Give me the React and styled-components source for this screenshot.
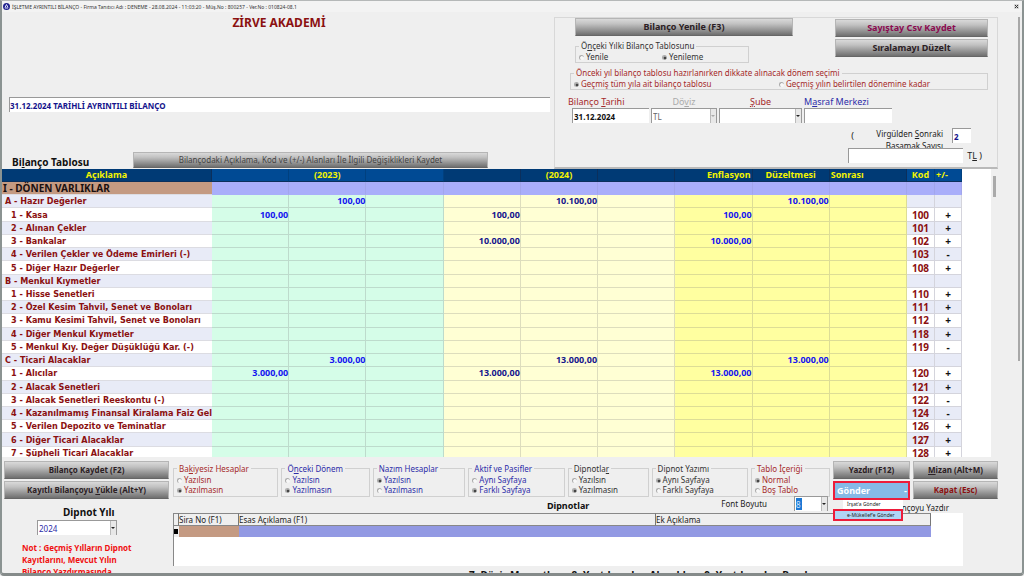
import React, { useState } from 'react'
import styled, { createGlobalStyle } from 'styled-components'

const GlobalStyle = createGlobalStyle`
    * {
        box-sizing: border-box;
    }
    body {
        margin: 0;
        background-color: #efefef;
        font-family: "Noto Sans", "Open Sans", sans-serif;
        font-size: 9px;
        line-height: 12px;
        color: #222;
    }
    button, input, select {
        font-family: inherit;
        margin: 0;
    }
`
const Window = styled.div`
    height: 100vh;
    display: flex;
    flex-direction: column;
    background-color: #efefef;
    border: 2px solid #8b9392;
    border-top: 1px solid #b5b8b8;
    border-bottom: 3px solid #858b8a;
    border-radius: 0 0 4px 4px;
    overflow: hidden;
`
const TitleBar = styled.header`
    display: flex;
    align-items: center;
    height: 11px;
    padding: 0 3px 0 1px;
    gap: 2px;
    background-color: #f3f3f3;
    font-size: 5px;
    line-height: 10px;
    color: #333;
`
const TitleText = styled.span`
    flex: 1;
`
const CloseButton = styled.button`
    display: flex;
    padding: 0;
    border: none;
    background: none;
`
const Body = styled.div`
    flex: 1;
    min-height: 0;
    display: flex;
`
const Main = styled.main`
    flex: 1;
    min-width: 0;
    display: flex;
    flex-direction: column;
`
const PageScroll = styled.div`
    width: 24px;
    padding: 5px 2px 0 0;
    display: flex;
    justify-content: flex-end;
`
const PageThumb = styled.div`
    width: 2px;
    height: 344px;
    background-color: #a8a8a8;
`
const Top = styled.section`
    display: flex;
    height: 157px;
    gap: 4px;
`
const TopLeft = styled.div`
    flex: 1;
    display: flex;
    flex-direction: column;
`
const Company = styled.h1`
    margin: 2px 0 66px;
    padding-left: 6px;
    text-align: center;
    font-size: 12px;
    line-height: 17px;
    color: #8b1010;
`
const ReportTitle = styled.input`
    height: 15px;
    margin-left: 7px;
    padding: 0;
    border: none;
    border-top: 1px solid #999;
    border-left: 1px solid #999;
    background-color: #fff;
    font-size: 8px;
    font-weight: bold;
    color: #14148c;
`
const TableBar = styled.div`
    display: flex;
    align-items: flex-end;
    margin-top: auto;
    padding: 0 62px 1px 10px;
`
const TableTitle = styled.h2`
    width: 121px;
    margin: 0;
    font-size: 10px;
    line-height: 12px;
    color: #111;
`
const MetalButton = styled.button`
    flex: ${p => p.$grow ? 1 : 'none'};
    height: ${p => p.$small ? 16 : 18}px;
    padding: 0 4px;
    border: 1px solid #b5b5b5;
    border-bottom-color: #666;
    background: linear-gradient(#d9d9d9, #c2c2c2 30%, #6f6f6f);
    font-size: ${p => p.$size || 9}px;
    line-height: 14px;
    font-weight: ${p => p.$light ? 'normal' : 'bold'};
    color: ${p => p.$color || '#2b2024'};
    white-space: nowrap;
`
const Settings = styled.div`
    width: 444px;
    margin-top: 5px;
    padding: 0 9px 0 13px;
    border: 1px solid #d8d8d8;
    border-bottom: 2px solid #b9b9b9;
    display: flex;
    flex-direction: column;
`
const SettingsHead = styled.div`
    display: flex;
    justify-content: space-between;
    padding-left: 7px;
`
const HeadColumn = styled.div`
    width: ${p => p.$width}px;
    display: flex;
    flex-direction: column;
    gap: ${p => p.$gap}px;
    padding-top: ${p => p.$top || 0}px;
`
const Group = styled.fieldset`
    min-width: 0;
    margin: ${p => p.$spaced ? '4px 0 0 2px' : 0};
    padding: ${p => p.$flat ? '0 3px' : '0 3px 1px'};
    border: 1px solid #d0d0d0;
    width: ${p => p.$width ? p.$width + 'px' : 'auto'};
    flex: ${p => p.$flex || 'none'};
    color: ${p => p.$color || '#333'};
`
const Legend = styled.legend`
    padding: 0 2px;
    font-size: 8px;
    line-height: ${p => p.$flat ? 12 : 13}px;
    white-space: nowrap;
`
const Choices = styled.div`
    display: ${p => p.$row ? 'grid' : 'flex'};
    grid-template-columns: 1fr 1fr;
    flex-direction: column;
`
const Choice = styled.label`
    display: flex;
    align-items: center;
    gap: 2px;
    font-size: 8px;
    line-height: 10px;
    white-space: nowrap;
`
const Radio = styled.input`
    appearance: none;
    width: 5px;
    height: 5px;
    border-top: 1px solid #aaa;
    border-left: 1px solid #aaa;
    border-radius: 50%;
    background-color: #f8f8f8;
    &:checked {
        background: radial-gradient(#444 0 1px, #ddd 2px);
    }
`
const Fields = styled.div`
    display: flex;
    gap: 2px;
    margin-top: 5px;
`
const Field = styled.label`
    width: ${p => p.$width}px;
    display: flex;
    flex-direction: column;
    align-items: ${p => p.$end ? 'flex-end' : 'stretch'};
    font-size: 9px;
    line-height: 13px;
    color: ${p => p.$color};
`
const FieldLabel = styled.span`
    align-self: ${p => p.$center ? 'center' : 'flex-start'};
`
const TextInput = styled.input`
    width: ${p => p.$width ? p.$width + 'px' : '100%'};
    height: 15px;
    padding: 0 1px;
    border: none;
    border-top: 1px solid #999;
    border-left: 1px solid #999;
    background-color: #fff;
    font-size: 8px;
    font-weight: bold;
    color: ${p => p.$color || '#111'};
`
const SelectBox = styled.span`
    display: flex;
    position: relative;
    width: ${p => p.$width ? p.$width + 'px' : '100%'};
    height: 15px;
    border-top: 1px solid #999;
    border-left: 1px solid #999;
    &::after {
        content: "";
        position: absolute;
        top: 6px;
        right: 2px;
        border: 2px solid transparent;
        border-top-color: ${p => p.$muted ? '#aaa' : '#222'};
        pointer-events: none;
    }
`
const Select = styled.select`
    appearance: none;
    flex: 1;
    min-width: 0;
    padding: 0 1px;
    border: none;
    border-radius: 0;
    background:
        ${p => p.$marked ? 'linear-gradient(#1c78d4, #1c78d4) 1px 1px / 6px 12px no-repeat,' : ''}
        linear-gradient(to left, #999 1px, #e8e8e8 1px 6px, #bbb 6px 7px, #fff 7px);
    font-size: 8px;
    color: ${p => p.$color || '#666'};
`
const Decimals = styled.div`
    display: flex;
    justify-content: flex-end;
    gap: 9px;
    height: 20px;
    margin-top: 5px;
    padding-right: 17px;
    overflow: hidden;
`
const DecimalsLabel = styled.label`
    width: 74px;
    margin-left: 6px;
    text-align: right;
    font-size: 8px;
    line-height: 12px;
`
const Paren = styled.span`
    line-height: 16px;
`
const Amount = styled.label`
    display: flex;
    align-items: center;
    justify-content: flex-end;
    gap: 4px;
    padding-right: 6px;
`
const TableArea = styled.section`
    display: flex;
    height: 288px;
    flex: none;
    overflow: hidden;
`
const Sheet = styled.table`
    width: 100%;
    height: 291px;
    table-layout: fixed;
    border-collapse: separate;
    border-spacing: 0;
    font-size: 9px;
    line-height: 12px;
    font-weight: bold;
    white-space: nowrap;
`
const SheetFrame = styled.div`
    flex: 1;
    min-width: 0;
    padding-right: 29px;
    background: #fff;
`
const Col = styled.col`
    width: ${p => p.$width ? p.$width + 'px' : 'auto'};
`
const HeadCell = styled.th`
    padding: 0 1px;
    text-align: ${p => p.$align || 'center'};
    background-color: ${p => p.$bright ? '#004a94' : '#003a75'};
    border-right: 1px solid ${p => p.$bright ? '#00407f' : '#0b2f5c'};
    border-bottom: 1px solid #0b2f5c;
    color: #f4f400;
`
const rowBack = p => p.$section ? '#c49a82' : p.$even ? '#e8ebf7' : '#fff'
const NameCell = styled.td`
    padding: 0 0 0 ${p => p.$level === 0 ? 1 : p.$level === 1 ? 3 : 9}px;
    overflow: hidden;
    font-family: ${p => p.$section ? '"Noto Sans"' : '"DejaVu Sans Condensed", "Noto Sans"'}, sans-serif;
    font-size: ${p => p.$section ? 10 : 9}px;
    background-color: ${rowBack};
    border-bottom: 1px solid #dcdce2;
    color: ${p => p.$section ? '#1a1010' : '#8b1010'};
`
const bands = ['#d5fde8', '#ffffd4', '#ffffa0']
const NumberCell = styled.td`
    padding: 0;
    text-align: right;
    background-color: ${p => p.$section ? '#a9aefa' : bands[p.$band]};
    border-right: 1px solid ${p => p.$section ? '#a2a6ec' : 'rgba(120, 120, 120, 0.25)'};
    border-bottom: 1px solid ${p => p.$section ? '#a9aefa' : 'rgba(120, 120, 120, 0.25)'};
    color: ${p => p.$band === 1 ? '#14148c' : '#1414f0'};
`
const CodeCell = styled.td`
    padding: 0;
    text-align: center;
    font-size: 10px;
    background-color: ${p => p.$section ? '#a9aefa' : p.$even ? '#e8ebf7' : '#fff'};
    border-right: 1px solid ${p => p.$section ? '#a2a6ec' : '#d4d4dc'};
    border-bottom: 1px solid ${p => p.$section ? '#a9aefa' : '#d4d4dc'};
    color: ${p => p.$sign ? '#111' : '#8b1010'};
`
const SheetScroll = styled.div`
    width: 7px;
    padding: 7px 2px;
`
const SheetThumb = styled.div`
    height: 21px;
    background-color: #aaa;
`
const Bottom = styled.section`
    flex: 1;
    min-height: 0;
    display: flex;
    gap: 4px;
    padding: 4px 0 0 2px;
    overflow: hidden;
`
const BottomLeft = styled.div`
    width: 165px;
    flex: none;
    display: flex;
    flex-direction: column;
    gap: 2px;
`
const YearField = styled.label`
    display: flex;
    flex-direction: column;
    gap: 1px;
    margin: 5px 0;
    padding-left: 33px;
    font-size: 10px;
    line-height: 13px;
    font-weight: bold;
    color: #111;
`
const YearLabel = styled.span`
    padding-left: 26px;
`
const Note = styled.p`
    margin: 0;
    padding: 0 24px 0 18px;
    font-size: 8px;
    line-height: 12px;
    font-weight: bold;
    color: #f01010;
`
const BottomMain = styled.div`
    flex: 1;
    min-width: 0;
    display: flex;
    flex-direction: column;
`
const Controls = styled.div`
    display: flex;
    gap: 3px;
    height: 52px;
`
const Options = styled.div`
    flex: 1;
    min-width: 0;
`
const OptionGroups = styled.div`
    display: flex;
    gap: 3px;
    padding-top: 1px;
`
const NotesBar = styled.div`
    display: flex;
    justify-content: flex-end;
    padding-right: 2px;
`
const NotesTitle = styled.h2`
    margin: 2px 132px 0 0;
    font-size: 9px;
    line-height: 13px;
    color: #111;
`
const FontField = styled.label`
    display: flex;
    align-items: center;
    gap: 27px;
    height: 13px;
    font-size: 8px;
`
const Actions = styled.div`
    display: grid;
    grid-template-columns: 77px 85px;
    gap: 2px 3px;
    align-content: start;
`
const SendWrap = styled.div`
    position: relative;
`
const SendButton = styled.button`
    display: flex;
    align-items: center;
    justify-content: space-between;
    width: 100%;
    height: 19px;
    padding: 0 1px 0 2px;
    border: 2px solid #ed1c3a;
    background-color: #86b9e6;
    font-size: 9px;
    line-height: 13px;
    font-weight: bold;
    color: #fff;
`
const Menu = styled.div`
    position: absolute;
    top: 19px;
    left: 0;
    width: 70px;
    background: linear-gradient(to right, #efefef 10px, #fff 10px);
`
const MenuItem = styled.button`
    display: block;
    width: 100%;
    height: ${p => p.$active ? 12 : 9}px;
    padding: 0 0 0 ${p => p.$active ? 12 : 14}px;
    border: ${p => p.$active ? '2px solid #ed1c3a' : 'none'};
    background-color: ${p => p.$active ? '#b0d6f5' : 'transparent'};
    font-size: 5px;
    line-height: 7px;
    text-align: left;
    white-space: nowrap;
    color: #222;
`
const PrintLabel = styled.span`
    grid-column: 1 / 3;
    justify-self: end;
    padding-right: 49px;
    font-size: 8px;
`
const NotesBox = styled.div`
    flex: none;
    height: 53px;
    margin-right: 35px;
    padding-right: 32px;
    border-left: 1px solid #888;
    background-color: #fff;
`
const NotesTable = styled.table`
    width: 100%;
    table-layout: fixed;
    border-collapse: separate;
    border-spacing: 0;
    font-size: 8px;
    line-height: 11px;
`
const NotesHead = styled.th`
    padding: 0;
    font-weight: normal;
    text-align: left;
    background-color: #efefef;
    border-top: 1px solid #888;
    border-right: 1px solid #777;
    border-bottom: 1px solid #888;
`
const NotesCell = styled.td`
    height: 11px;
    padding: 0;
    background-color: ${p => p.$color};
    border-right: 1px solid ${p => p.$color};
    font-size: 6px;
`
const RowMark = styled.div`
    width: 4px;
    height: 5px;
    background-color: #000;
`
const Footnote = styled.p`
    flex: none;
    margin: 2px 0 0;
    padding-left: 296px;
    font-size: 10px;
    line-height: 14px;
    font-weight: bold;
    white-space: nowrap;
    color: #111;
`

// level, name, code, sign, values by column index
const rows = [
    [0, 'I - DÖNEN VARLIKLAR', '', '', {}],
    [1, 'A - Hazır Değerler', '', '', { 1: '100,00', 4: '10.100,00', 7: '10.100,00' }],
    [2, '1 - Kasa', '100', '+', { 0: '100,00', 3: '100,00', 6: '100,00' }],
    [2, '2 - Alınan Çekler', '101', '+', {}],
    [2, '3 - Bankalar', '102', '+', { 3: '10.000,00', 6: '10.000,00' }],
    [2, '4 - Verilen Çekler ve Ödeme Emirleri (-)', '103', '-', {}],
    [2, '5 - Diğer Hazır Değerler', '108', '+', {}],
    [1, 'B - Menkul Kıymetler', '', '', {}],
    [2, '1 - Hisse Senetleri', '110', '+', {}],
    [2, '2 - Özel Kesim Tahvil, Senet ve Bonoları', '111', '+', {}],
    [2, '3 - Kamu Kesimi Tahvil, Senet ve Bonoları', '112', '+', {}],
    [2, '4 - Diğer Menkul Kıymetler', '118', '+', {}],
    [2, '5 - Menkul Kıy. Değer Düşüklüğü Kar. (-)', '119', '-', {}],
    [1, 'C - Ticari Alacaklar', '', '', { 1: '3.000,00', 4: '13.000,00', 7: '13.000,00' }],
    [2, '1 - Alıcılar', '120', '+', { 0: '3.000,00', 3: '13.000,00', 6: '13.000,00' }],
    [2, '2 - Alacak Senetleri', '121', '+', {}],
    [2, '3 - Alacak Senetleri Reeskontu (-)', '122', '-', {}],
    [2, '4 - Kazanılmamış Finansal Kiralama Faiz Gelirleri (-)', '124', '-', {}],
    [2, '5 - Verilen Depozito ve Teminatlar', '126', '+', {}],
    [2, '6 - Diğer Ticari Alacaklar', '127', '+', {}],
    [2, '7 - Şüpheli Ticari Alacaklar', '128', '+', {}],
]
const numberCols = [0, 1, 2, 3, 4, 5, 6, 7, 8]

const red = '#a52a2a'
const blue = '#2c2ca8'
const groups = [
    { name: 'bakiyesiz', title: <>Ba<u>k</u>iyesiz Hesaplar</>, items: ['Yazılsın', 'Yazılmasın'], value: 1, color: red, flex: 107 },
    { name: 'onceki', title: <>Ö<u>n</u>ceki Dönem</>, items: ['Yazılsın', 'Yazılmasın'], value: 1, color: blue, flex: 88 },
    { name: 'nazim', title: 'Nazım Hesaplar', items: ['Yazılsın', 'Yazılmasın'], value: 0, color: blue, flex: 93 },
    { name: 'aktif', title: 'Aktif ve Pasifler', items: ['Aynı Sayfaya', 'Farklı Sayfaya'], value: 1, color: blue, flex: 97 },
    { name: 'dipnotlar', title: <>Dipnotla<u>r</u></>, items: ['Yazılsın', 'Yazılmasın'], value: 1, flex: 80 },
    { name: 'yazim', title: 'Dipnot Yazımı', items: ['Aynı Sayfaya', 'Farklı Sayfaya'], value: 0, flex: 97 },
    { name: 'icerik', title: 'Tablo İçeriği', items: ['Normal', 'Boş Tablo'], value: 0, color: red, flex: 78 },
]

const RadioGroup = ({ name, title, items, value, row, ...rest }) => {
    const [selected, setSelected] = useState(value)
    return (
        <Group $flat={row} {...rest}>
            <Legend $flat={row}>{title}</Legend>
            <Choices $row={row}>
                {items.map((item, i) => (
                    <Choice key={item}>
                        <Radio type="radio" name={name} checked={selected === i} onChange={() => setSelected(i)} />
                        {item}
                    </Choice>
                ))}
            </Choices>
        </Group>
    )
}

const Header = () => (
    <Top>
        <TopLeft>
            <Company>ZİRVE AKADEMİ</Company>
            <ReportTitle aria-label="Rapor başlığı" defaultValue="31.12.2024 TARİHLİ AYRINTILI BİLANÇO" />
            <TableBar>
                <TableTitle>Bi<u>l</u>anço Tablosu</TableTitle>
                <MetalButton $grow $small $light $size={8} $color="#444">Bilançodaki Açıklama, Kod ve (+/-) Alanları İle İlgili Değişiklikleri Kaydet</MetalButton>
            </TableBar>
        </TopLeft>
        <Settings>
            <SettingsHead>
                <HeadColumn $width={218} $gap={4}>
                    <MetalButton>Bilanço Yenile (F3)</MetalButton>
                    <RadioGroup name="tablo" title={<>Ö<u>n</u>çeki Yılki Bilanço Tablosunu</>} items={['Yenile', 'Yenileme']} value={1} row $width={174} />
                </HeadColumn>
                <HeadColumn $width={153} $gap={2} $top={1}>
                    <MetalButton $color="#8b0a50">Sayıştay Csv Kaydet</MetalButton>
                    <MetalButton>Sıralamayı Düzelt</MetalButton>
                </HeadColumn>
            </SettingsHead>
            <RadioGroup
                name="donem"
                title="Önceki yıl bilanço tablosu hazırlanırken dikkate alınacak dönem seçimi"
                items={['Geçmiş tüm yıla ait bilanço tablosu', 'Geçmiş yılın belirtilen dönemine kadar']}
                value={0}
                row
                $spaced
                $color={red}
            />
            <Fields>
                <Field $width={81} $color={red} $end>
                    <FieldLabel>Bilanço <u>T</u>arihi</FieldLabel>
                    <TextInput $width={77} defaultValue="31.12.2024" />
                </Field>
                <Field $width={66} $color="#aaa">
                    <FieldLabel $center>Dö<u>v</u>iz</FieldLabel>
                    <SelectBox $muted><Select defaultValue="TL"><option>TL</option></Select></SelectBox>
                </Field>
                <Field $width={83} $color={red}>
                    <FieldLabel $center><u>Ş</u>ube</FieldLabel>
                    <SelectBox><Select><option></option></Select></SelectBox>
                </Field>
                <Field $width={88} $color={blue}>
                    <FieldLabel>M<u>a</u>sraf Merkezi</FieldLabel>
                    <TextInput />
                </Field>
            </Fields>
            <Decimals>
                <Paren>(</Paren>
                <DecimalsLabel htmlFor="decimals">Virgülden <u>S</u>onraki Basamak Sayısı</DecimalsLabel>
                <TextInput id="decimals" $width={19} $color="#14148c" defaultValue="2" />
            </Decimals>
            <Amount>
                <TextInput $width={115} />
                <span>T<u>L</u> )</span>
            </Amount>
        </Settings>
    </Top>
)

const BalanceSheet = () => (
    <TableArea>
        <SheetFrame>
            <Sheet>
                <colgroup>
                    <Col $width={210} />
                    {numberCols.map(c => <Col key={c} />)}
                    <Col $width={28} />
                    <Col $width={27} />
                </colgroup>
                <thead>
                    <tr>
                        <HeadCell>Açıklama</HeadCell>
                        <HeadCell $bright />
                        <HeadCell $bright>(2023)</HeadCell>
                        <HeadCell $bright />
                        <HeadCell />
                        <HeadCell>(2024)</HeadCell>
                        <HeadCell />
                        <HeadCell $align="right">Enflasyon</HeadCell>
                        <HeadCell>Düzeltmesi</HeadCell>
                        <HeadCell $align="left">Sonrası</HeadCell>
                        <HeadCell $bright>Kod</HeadCell>
                        <HeadCell $bright $align="left">+/-</HeadCell>
                    </tr>
                </thead>
                <tbody>
                    {rows.map(([level, name, code, sign, values], i) => {
                        const section = level === 0
                        const even = i % 2 === 1
                        return (
                            <tr key={name}>
                                <NameCell $level={level} $section={section} $even={even}>{name}</NameCell>
                                {numberCols.map(c => (
                                    <NumberCell key={c} $section={section} $band={Math.floor(c / 3)}>{values[c]}</NumberCell>
                                ))}
                                <CodeCell $section={section} $even={even}>{code}</CodeCell>
                                <CodeCell $section={section} $even={even} $sign>{sign}</CodeCell>
                            </tr>
                        )
                    })}
                </tbody>
            </Sheet>
        </SheetFrame>
        <SheetScroll><SheetThumb /></SheetScroll>
    </TableArea>
)

const Notes = () => (
    <NotesBox>
        <NotesTable>
            <colgroup>
                <Col $width={5} />
                <Col $width={60} />
                <Col $width={417} />
                <Col />
            </colgroup>
            <thead>
                <tr>
                    <NotesHead />
                    <NotesHead>Sira No (F1)</NotesHead>
                    <NotesHead>Esas Açıklama (F1)</NotesHead>
                    <NotesHead>Ek Açıklama</NotesHead>
                </tr>
            </thead>
            <tbody>
                <tr>
                    <NotesCell $color="#efefef"><RowMark /></NotesCell>
                    <NotesCell $color="#c49a82" />
                    <NotesCell $color="#9299e3" />
                    <NotesCell $color="#9299e3" />
                </tr>
            </tbody>
        </NotesTable>
    </NotesBox>
)

const Footer = () => (
    <Bottom>
        <BottomLeft>
            <MetalButton $size={8}>Bilanço Kaydet (F2)</MetalButton>
            <MetalButton $size={8}>Kayıtlı Bilançoyu <u>Y</u>ükle (Alt+Y)</MetalButton>
            <YearField>
                <YearLabel>Dipnot Yılı</YearLabel>
                <SelectBox $width={80}><Select $color={blue} defaultValue="2024"><option>2024</option></Select></SelectBox>
            </YearField>
            <Note>Not : Geçmiş Yılların Dipnot Kayıtlarını, Mevcut Yılın Bilanço Yazdırmasında</Note>
        </BottomLeft>
        <BottomMain>
            <Controls>
                <Options>
                    <OptionGroups>
                        {groups.map(({ color, flex, ...group }) => (
                            <RadioGroup key={group.name} {...group} $color={color} $flex={`${flex} 1 0`} />
                        ))}
                    </OptionGroups>
                    <NotesBar>
                        <NotesTitle>Dipnotlar</NotesTitle>
                        <FontField>
                            Font Boyutu
                            <SelectBox $width={34}><Select $marked $color="#cfe6ff" defaultValue="8"><option>8</option></Select></SelectBox>
                        </FontField>
                    </NotesBar>
                </Options>
                <Actions>
                    <MetalButton $size={8}>Yazdır (F12)</MetalButton>
                    <MetalButton $size={8}><u>M</u>izan (Alt+M)</MetalButton>
                    <SendWrap>
                        <SendButton>Gönder <span>-</span></SendButton>
                        <Menu>
                            <MenuItem>İrşat'a Gönder</MenuItem>
                            <MenuItem $active>e-Mükellef'e Gönder</MenuItem>
                        </Menu>
                    </SendWrap>
                    <MetalButton $size={8} $color="#8b1010">Kapat (Esc)</MetalButton>
                    <PrintLabel>Bilançoyu Yazdır</PrintLabel>
                </Actions>
            </Controls>
            <Notes />
            <Footnote>7- Döviz Mevcutları , 8- Yurtdışından Alacaklar , 9- Yurtdışından Borçlar</Footnote>
        </BottomMain>
    </Bottom>
)

const App = () => {
    return (
        <Window>
            <GlobalStyle />
            <TitleBar>
                <svg width="7" height="7" viewBox="0 0 14 14">
                    <circle cx="7" cy="7" r="7" fill="#23238e" />
                    <path d="M4 9 L7 3 L10 9 M4 10 H10" stroke="#dfe3ff" strokeWidth="2" fill="none" />
                </svg>
                <TitleText>İŞLETME AYRINTILI BİLANÇO - Firma Tanıtıcı Adı : DENEME - 28.08.2024 - 11:03:20 - Müş.No : 800257 - Ver.No : 010824-08.1</TitleText>
                <CloseButton aria-label="Kapat">
                    <svg width="5" height="5" viewBox="0 0 5 5">
                        <rect width="5" height="5" fill="#d5d5d5" />
                        <path d="M1 1 L4 4 M4 1 L1 4" stroke="#333" />
                    </svg>
                </CloseButton>
            </TitleBar>
            <Body>
                <Main>
                    <Header />
                    <BalanceSheet />
                    <Footer />
                </Main>
                <PageScroll><PageThumb /></PageScroll>
            </Body>
        </Window>
    )
}

export default App
